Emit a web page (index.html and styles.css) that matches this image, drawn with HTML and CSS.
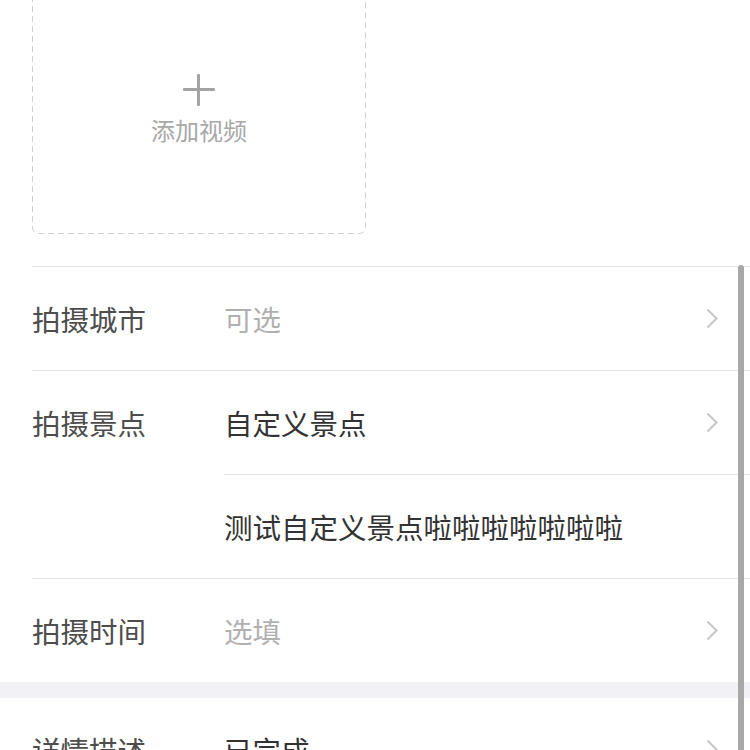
FILE: index.html
```html
<!DOCTYPE html>
<html>
<head lang="zh">
    <meta charset="UTF-8">
    <title>发布</title>
    <link rel="stylesheet" href="styles.css">
</head>
<body>
<div class="page">
    <div class="upload">
        <div class="upload-box">
            <svg class="dash" width="334" height="248" viewBox="0 0 334 248">
                <rect x="0.5" y="0.5" width="333" height="247" rx="6" ry="6" fill="none" stroke="#cfcfcf" stroke-width="1" stroke-dasharray="6 4"/>
            </svg>
            <span class="plus"></span>
            <span class="upload-txt">添加视频</span>
        </div>
    </div>

    <ul class="form">
        <li class="row">
            <span class="label">拍摄城市</span>
            <div class="cells">
                <div class="cell">
                    <span class="value empty">可选</span>
                    <svg class="arrow" width="12" height="21" viewBox="0 0 12 21"><polyline points="1.5,1.5 10.5,10.5 1.5,19.5" fill="none" stroke="#c8c8c8" stroke-width="2.2"/></svg>
                </div>
            </div>
        </li>
        <li class="row">
            <span class="label">拍摄景点</span>
            <div class="cells">
                <div class="cell">
                    <span class="value">自定义景点</span>
                    <svg class="arrow" width="12" height="21" viewBox="0 0 12 21"><polyline points="1.5,1.5 10.5,10.5 1.5,19.5" fill="none" stroke="#c8c8c8" stroke-width="2.2"/></svg>
                </div>
                <div class="cell">
                    <span class="value">测试自定义景点啦啦啦啦啦啦啦</span>
                </div>
            </div>
        </li>
        <li class="row">
            <span class="label">拍摄时间</span>
            <div class="cells">
                <div class="cell">
                    <span class="value empty">选填</span>
                    <svg class="arrow" width="12" height="21" viewBox="0 0 12 21"><polyline points="1.5,1.5 10.5,10.5 1.5,19.5" fill="none" stroke="#c8c8c8" stroke-width="2.2"/></svg>
                </div>
            </div>
        </li>
    </ul>

    <div class="gap"></div>

    <ul class="form">
        <li class="row first">
            <span class="label">详情描述</span>
            <div class="cells">
                <div class="cell">
                    <span class="value">已完成</span>
                    <svg class="arrow" width="12" height="21" viewBox="0 0 12 21"><polyline points="1.5,1.5 10.5,10.5 1.5,19.5" fill="none" stroke="#c8c8c8" stroke-width="2.2"/></svg>
                </div>
            </div>
        </li>
    </ul>

    <div class="scrollbar"></div>
</div>
</body>
</html>
```

FILE: styles.css
```css
*{
    margin: 0;
    padding: 0;
    box-sizing: border-box;
}
html,body{
    height: 100%;
    overflow: hidden;
    background: #fff;
}
body{
    font-family: "Noto Sans CJK SC", "Noto Sans", sans-serif;
}
.page{
    position: relative;
    display: flow-root;
    height: 100%;
}
/* 上传视频 */
.upload{
    padding: 0 0 32px 32px;
}
.upload-box{
    position: relative;
    width: 334px;
    height: 248px;
    margin-top: -14px;
    display: flex;
    flex-direction: column;
    align-items: center;
    justify-content: center;
}
.upload-box .dash{
    position: absolute;
    left: 0;
    top: 0;
}
.plus{
    position: relative;
    width: 32px;
    height: 32px;
}
.plus:before,
.plus:after{
    content: "";
    position: absolute;
    background: #a3a3a3;
    border-radius: 1px;
}
.plus:before{
    left: 0;
    right: 0;
    top: 14px;
    height: 3px;
}
.plus:after{
    top: 0;
    bottom: 0;
    left: 14px;
    width: 3px;
}
.upload-txt{
    margin-top: 8px;
    font-size: 24px;
    line-height: 32px;
    color: #a8a8a8;
}
/* 表单列表 */
.form{
    list-style: none;
    padding-left: 32px;
}
.row{
    display: flex;
    border-top: 1px solid #e3e3e3;
}
.row.first{
    border-top: 0;
}
.label{
    width: 192px;
    flex-shrink: 0;
    height: 103px;
    line-height: 103px;
    font-size: 28.5px;
    color: #4d4d4d;
}
.cells{
    flex: 1;
}
.cell{
    display: flex;
    align-items: center;
    height: 103px;
    padding-right: 32px;
}
.cell + .cell{
    height: 104px;
    border-top: 1px solid #e3e3e3;
}
.value{
    flex: 1;
    font-size: 28.5px;
    color: #333;
}
.value.empty{
    color: #b0b0b0;
}
.arrow{
    flex-shrink: 0;
}
.gap{
    height: 16px;
    background: #f2f2f6;
}
/* 滚动条 */
.scrollbar{
    position: absolute;
    left: 738px;
    top: 265px;
    bottom: 0;
    width: 6px;
    background: #a8a8a8;
    border-radius: 3px 3px 0 0;
}
```
